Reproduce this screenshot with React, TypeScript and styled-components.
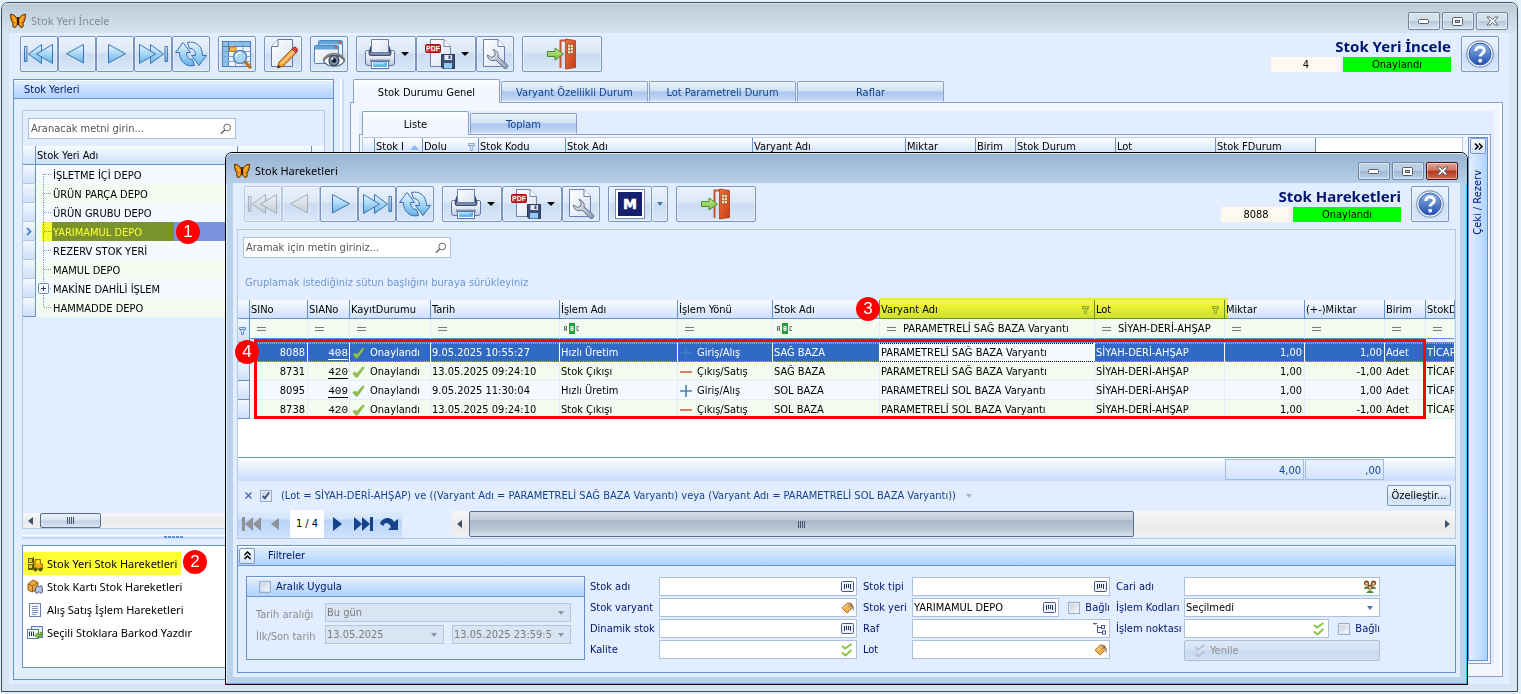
import React from "react";
import styled, { createGlobalStyle, css } from "styled-components";

const UI = '"DejaVu Sans Condensed", "Noto Sans", sans-serif';
const TITLE = '"Noto Sans", "Open Sans", sans-serif';
const LINE = "#6593cf";
const SOFT = "#b5c9e4";
const PANEL = "#e2eeff";
const NAVY = "#00156e";

const Global = createGlobalStyle`
  *, *::before, *::after { box-sizing: border-box; }
  body { margin: 0; background: #e4effc; font: 11px/14px ${UI}; color: #000; }
  button, input, select { font: inherit; color: inherit; margin: 0; }
  button { padding: 0; cursor: default; }
  svg { display: block; flex: none; }
`;

/* ---------- window chrome ---------- */

const Desktop = styled.main`
  position: relative;
  min-height: 100vh;
  padding: 2px 3px 2px 1px;
  display: flex;
  overflow: hidden;
`;

const MainWindow = styled.section`
  flex: 1;
  min-width: 0;
  display: flex;
  flex-direction: column;
  border: 1px solid #454a50;
  border-radius: 7px 7px 0 0;
  background: #d7e4f2;
  padding: 0 7px 7px;
`;

const DialogWindow = styled.section`
  position: absolute;
  left: 225px;
  top: 152px;
  right: 53px;
  bottom: 9px;
  display: flex;
  flex-direction: column;
  border: 1px solid #000;
  border-radius: 7px 7px 0 0;
  background: #b9d1ea;
  box-shadow: inset -1px -1px 0 #35c4e8, inset 1px 1px 0 #e8f2fb;
  padding: 0 7px 7px;
`;

const TitleBar = styled.header<{ $active?: boolean }>`
  height: 30px;
  margin: 0 -7px;
  padding: 5px 9px 0 8px;
  display: flex;
  align-items: center;
  gap: 5px;
  border-radius: 6px 6px 0 0;
  border-top: 1px solid ${(p) => (p.$active ? "#d9e6f3" : "#dfe7ee")};
  background: ${(p) =>
    p.$active ? "linear-gradient(#99b4d1, #b6cfe9)" : "linear-gradient(#bdcbd8, #d6e3f0)"};
`;

const TitleText = styled.h1<{ $active?: boolean }>`
  flex: 1;
  margin: 0;
  font: 400 11px/16px ${TITLE};
  color: ${(p) => (p.$active ? "#000" : "#858a90")};
`;

const WinButtonRow = styled.div`
  display: flex;
  gap: 2px;
`;

const WinButton = styled.button<{ $close?: boolean }>`
  width: 32px;
  height: 18px;
  display: grid;
  place-items: center;
  border: 1px solid ${(p) => (p.$close ? "#4c1017" : "#6f85a0")};
  border-radius: 2px;
  box-shadow: inset 0 0 0 1px rgba(255, 255, 255, 0.45);
  background: ${(p) =>
    p.$close
      ? "linear-gradient(#e2a598, #cf7563 45%, #b5341c 50%, #cc6a50)"
      : "linear-gradient(rgba(255,255,255,.35), rgba(255,255,255,.15) 48%, rgba(120,145,175,.25) 52%, rgba(255,255,255,.15))"};
`;

const Client = styled.div`
  flex: 1;
  min-height: 0;
  display: flex;
  flex-direction: column;
  background: ${PANEL};
`;

/* ---------- toolbar ---------- */

const Toolbar = styled.div`
  display: flex;
  padding: 3px 11px 7px;
`;

const Group = styled.div`
  display: flex;
  margin-right: 8px;
`;

const ToolButton = styled.button<{ $w?: number; $join?: boolean }>`
  width: ${(p) => p.$w ?? 38}px;
  height: 36px;
  display: flex;
  align-items: center;
  justify-content: center;
  gap: 5px;
  border: 1px solid #7896c2;
  border-radius: 2px;
  ${(p) => p.$join && css`border-left: 0;`}
  background: linear-gradient(#eaf2fc, #dce8f7 45%, #cbdcf2 50%, #d9e7f9);
  box-shadow: inset 0 0 0 1px rgba(255, 255, 255, 0.4);
  &:disabled {
    border-color: #b7c7de;
  }
`;

const Record = styled.div`
  margin-left: auto;
  display: grid;
  grid-template-columns: 70px 108px;
  grid-template-rows: 21px 15px;
  column-gap: 2px;
  margin-right: 10px;
`;

const RecordTitle = styled.h2`
  grid-column: 1 / 3;
  margin: 0;
  text-align: right;
  white-space: nowrap;
  font: 700 15px/21px ${TITLE};
  color: ${NAVY};
`;

const RecordCell = styled.div<{ $bg: string }>`
  background: ${(p) => p.$bg};
  text-align: center;
  line-height: 16px;
`;

/* ---------- main window body ---------- */

const MainBody = styled.div`
  flex: 1;
  min-height: 0;
  display: flex;
  padding: 0 7px 0 4px;
`;

const SidePanel = styled.aside`
  width: 321px;
  margin-bottom: 4px;
  display: flex;
  flex-direction: column;
  border: 1px solid ${LINE};
  padding-bottom: 11px;
`;

const PanelHeader = styled.h3`
  margin: 0;
  height: 19px;
  padding: 2px 0 0 10px;
  display: flex;
  align-items: center;
  border-bottom: 1px solid ${LINE};
  box-shadow: inset 0 1px 0 #fff;
  background: linear-gradient(#e3efff, #afd2ff);
  color: ${NAVY};
  font: 400 11px/14px ${UI};
`;

const TreeFrame = styled.div`
  flex: 1;
  margin: 11px 8px 0;
  display: flex;
  flex-direction: column;
  border: 1px solid ${SOFT};
`;

const SearchBox = styled.label`
  width: 208px;
  height: 21px;
  margin: 7px 0 0 5px;
  display: flex;
  align-items: center;
  border: 1px solid #abc1de;
  background: #fff;
  padding-right: 3px;
  input {
    flex: 1;
    min-width: 0;
    border: 0;
    outline: 0;
    padding: 0 2px;
    background: none;
  }
  input::placeholder {
    color: #555;
    opacity: 1;
  }
`;

const TreeHeader = styled.div`
  display: flex;
  height: 19px;
  margin-top: 7px;
  border-bottom: 1px solid ${LINE};
  background: linear-gradient(#f8fbff, #e3eefe 50%, #cfe0fb);
  line-height: 20px;
`;

const TreeHeadCell = styled.span<{ $w: number }>`
  width: ${(p) => p.$w}px;
  padding-left: 1px;
  border-right: 1px solid ${LINE};
`;

const TreeList = styled.ul`
  margin: 0;
  padding: 0;
  list-style: none;
  flex: 1;
`;

const TreeRow = styled.li`
  position: relative;
  display: flex;
  height: 19px;
  background: #f4faff;
  &:nth-child(even) {
    background: #f3fbf0;
  }
`;

const TreeHandle = styled.span`
  width: 13px;
  padding-left: 3px;
  display: flex;
  align-items: center;
  border-right: 1px solid ${LINE};
  border-bottom: 1px solid ${SOFT};
  background: linear-gradient(#f2f7ff, #cfe0fa);
  ${TreeRow}:last-child & {
    border-bottom-color: ${LINE};
  }
`;

const TreeBranch = styled.span`
  width: 16px;
`;

const TreeLabel = styled.span<{ $selected?: boolean }>`
  flex: 1;
  padding: 2px 0 0 1px;
  line-height: 17px;
  ${(p) => p.$selected && css`background: #7a93dd; color: #fff;`}
`;

const Marker = styled.span<{ $l: number; $t: number; $w: number; $h: number }>`
  position: absolute;
  left: ${(p) => p.$l}px;
  top: ${(p) => p.$t}px;
  width: ${(p) => p.$w}px;
  height: ${(p) => p.$h}px;
  background: #ffff33;
  mix-blend-mode: multiply;
  pointer-events: none;
`;

const Badge = styled.span<{ $l: number; $t: number }>`
  position: absolute;
  z-index: 2;
  left: ${(p) => p.$l}px;
  top: ${(p) => p.$t}px;
  width: 24px;
  height: 24px;
  border-radius: 50%;
  background: #f00;
  color: #fff;
  text-align: center;
  font: 400 17px/24px "Liberation Sans", sans-serif;
`;

const ScrollTrack = styled.div<{ $h: number }>`
  height: ${(p) => p.$h}px;
  padding: 0 5px;
  display: flex;
  align-items: center;
  flex: none;
  background: linear-gradient(#f7f7f7, #ebebeb 60%, #f0f0f0);
`;

const ScrollThumb = styled.span<{ $w: string; $dark?: boolean }>`
  width: ${(p) => p.$w};
  height: 100%;
  margin: 0 auto 0 7px;
  display: grid;
  place-items: center;
  border: 1px solid #5a6b8c;
  border-radius: 2px;
  background: ${(p) =>
    p.$dark
      ? "linear-gradient(#d3dbe5, #c3ced9 30%, #a9b8cb 36%, #bac7d6 75%, #dbe5ee)"
      : "linear-gradient(#eaf2fb, #dbe6f3 48%, #c0cfe2 52%, #d9e5f2)"};
`;

const Splitter = styled.div`
  height: 16px;
  margin: 0 8px;
  display: flex;
  align-items: center;
  justify-content: center;
  background: linear-gradient(#fff, #fff) 0 6px / 100% 1px no-repeat,
    linear-gradient(#c3dafa, #c3dafa) 0 8px / 100% 2px no-repeat;
`;

const ActionList = styled.ul`
  margin: 0 8px;
  padding: 6px 0 23px;
  list-style: none;
  border: 1px solid ${LINE};
  background: #fff;
`;

const ActionItem = styled.li`
  position: relative;
  height: 23px;
  a {
    display: flex;
    align-items: center;
    gap: 4px;
    height: 23px;
    padding: 1px 0 0 4px;
    color: #000;
    text-decoration: none;
    font: 400 11px/16px ${TITLE};
  }
`;

const VerticalSplitter = styled.div`
  width: 4px;
  margin: 0 6px 4px;
  background: linear-gradient(90deg, #fff 50%, #c9defb 50%);
`;

const TabArea = styled.div`
  flex: 1;
  min-width: 0;
  display: flex;
  flex-direction: column;
`;

const TabStrip = styled.div`
  display: flex;
  align-items: flex-end;
  gap: 1px;
  padding-left: 3px;
`;

const Tab = styled.button<{ $w: number; $active?: boolean }>`
  width: ${(p) => p.$w}px;
  height: ${(p) => (p.$active ? 24 : 21)}px;
  margin-bottom: ${(p) => (p.$active ? -1 : 0)}px;
  padding-top: 2px;
  position: relative;
  border: 1px solid #8ba0c9;
  border-bottom-width: ${(p) => (p.$active ? 0 : 1)}px;
  border-bottom-color: #f2f7ff;
  border-radius: 2px 2px 0 0;
  color: ${(p) => (p.$active ? "#000" : "#15428b")};
  background: ${(p) =>
    p.$active
      ? "linear-gradient(#fff, #f2f7ff 40%)"
      : "linear-gradient(#eef5fd, #cfdff4 48%, #a6c6ef 52%, #c9defa)"};
`;

const TabPage = styled.div`
  flex: 1;
  display: flex;
  flex-direction: column;
  border: 1px solid #8ba0c9;
  background: #f2f7ff;
  padding: 8px 8px 12px;
  margin-bottom: 7px;
  box-shadow: inset -2px 0 0 #fff;
`;

const InnerArea = styled.div`
  flex: 1;
  display: flex;
  flex-direction: column;
  background: ${PANEL};
  padding-right: 3px;
`;

const InnerPage = styled.div`
  flex: 1;
  display: flex;
  border: 1px solid #8ba0c9;
  background: #f2f7ff;
  padding: 2px;
`;

const StockGrid = styled.div`
  flex: 1;
  min-width: 0;
  overflow: hidden;
  border: 1px solid ${SOFT};
  background: #fff;
  table {
    border-spacing: 0;
    table-layout: fixed;
    width: 953px;
  }
  th {
    height: 19px;
    padding: 0 0 0 1px;
    font-weight: 400;
    text-align: left;
    white-space: nowrap;
    border-right: 1px solid ${LINE};
    border-bottom: 1px solid ${LINE};
    background: linear-gradient(#fff, #e3eefe 50%, #cfe0fb);
  }
`;

const HeadInner = styled.span`
  display: flex;
  align-items: center;
  justify-content: space-between;
  padding-right: 3px;
`;

const DockBar = styled.aside`
  width: 20px;
  margin-left: 5px;
  border: 1px solid ${LINE};
  background: linear-gradient(90deg, #e3efff, #afd2ff);
  display: flex;
  flex-direction: column;
  align-items: center;
`;

const ChevronButton = styled.button`
  width: 16px;
  height: 16px;
  display: grid;
  place-items: center;
  border: 1px solid #7f98c0;
  border-radius: 2px;
  background: linear-gradient(#f7fbff, #d4e4fa);
`;

const DockLabel = styled.span`
  margin-top: 16px;
  writing-mode: vertical-rl;
  transform: rotate(180deg);
  color: ${NAVY};
`;

/* ---------- dialog body ---------- */

const GridPanel = styled.div`
  flex: 1;
  min-height: 0;
  margin: 0 4px;
  display: flex;
  flex-direction: column;
  border: 1px solid ${SOFT};
`;

const GroupHint = styled.p`
  margin: 0;
  height: 42px;
  padding: 18px 0 0 7px;
  color: #6f97d0;
`;

const GridHolder = styled.div`
  position: relative;
  flex: 1;
  min-height: 0;
  background: #fff;
`;

const GridClip = styled.div`
  overflow: hidden;
`;

const DataTable = styled.table`
  border-spacing: 0;
  table-layout: fixed;
  width: 100%;
  min-width: 1217px;
  white-space: nowrap;
  th,
  td {
    padding: 0 2px 0 1px;
    overflow: hidden;
    text-align: left;
    font-weight: 400;
  }
  th {
    padding-top: 1px;
  }
`;

const HeadCell = styled.th`
  height: 19px;
  line-height: 16px;
  border-right: 1px solid ${LINE};
  border-bottom: 1px solid ${LINE};
  background: linear-gradient(#f8fbff, #e3eefe 50%, #cfe0fb);
`;

const FilterCell = styled.td`
  height: 24px;
  border-right: 1px solid #e2ecfb;
  border-bottom: 1px solid ${LINE};
  background: linear-gradient(#f3fbf1, #f3fbf1) 0 0 / 100% 19px no-repeat,
    linear-gradient(${LINE}, ${LINE}) 0 19px / 100% 1px no-repeat, ${PANEL};
  vertical-align: top;
`;

const FilterInner = styled.span<{ $pad: number }>`
  display: flex;
  align-items: center;
  gap: 7px;
  height: 19px;
  padding-left: ${(p) => p.$pad}px;
`;

const HandleCell = styled.td`
  height: 19px;
  border-right: 1px solid ${LINE};
  border-bottom: 1px solid ${LINE};
  background: linear-gradient(#f2f7ff, #cfe0fa);
`;

const DataRow = styled.tr<{ $tone: "a" | "b" | "sel" }>`
  background: ${(p) => ({ a: "#f4faff", b: "#f3fbf0", sel: "#316ac5" })[p.$tone]};
  color: ${(p) => (p.$tone === "sel" ? "#fff" : "#000")};
`;

const Cell = styled.td<{ $right?: boolean; $focus?: boolean; $sel?: boolean }>`
  height: 19px;
  line-height: 16px;
  border-right: 1px solid ${(p) => (p.$sel ? "#fff" : "#e2ecfb")};
  border-bottom: 1px solid #e2ecfb;
  && {
    padding-top: 2px;
    text-align: ${(p) => (p.$right ? "right" : "left")};
    ${(p) =>
      p.$sel &&
      css`
        border-bottom: 1px dotted ${p.$focus ? "#000" : "#e8a24a"};
        background: linear-gradient(90deg, ${p.$focus ? "#000" : "#e8a24a"} 50%, transparent 50%) 0 0 /
          2px 1px repeat-x ${p.$focus ? "#f4faff" : "#316ac5"};
        color: ${p.$focus ? "#000" : "#fff"};
      `}
  }
`;

const RefCell = styled(Cell)`
  && {
    padding-right: 1px;
    line-height: 14px;
  }
`;

const CellIcon = styled.span<{ $gap: number }>`
  display: flex;
  align-items: center;
  gap: ${(p) => p.$gap}px;
  padding-left: ${(p) => p.$gap - 4}px;
`;

const RefLink = styled.a`
  color: inherit;
  text-decoration: none;
  font: 11px/12px "Liberation Mono", monospace;
  border-bottom: 1px solid currentColor;
`;

const RedFrame = styled.div`
  position: absolute;
  left: 16px;
  top: 39px;
  width: 1172px;
  height: 80px;
  border: 3px solid #f00;
  pointer-events: none;
`;

const SummaryBar = styled.div`
  height: 24px;
  display: flex;
  gap: 1px;
  padding: 1px 0 1px 987px;
  border-top: 1px solid ${LINE};
  background: linear-gradient(#fdfeff, #c8dcfb);
`;

const SummaryCell = styled.span`
  flex: none;
  width: 79px;
  border: 1px solid #9dbce6;
  background: linear-gradient(#eaf3ff, #d3e4fc);
  color: #15428b;
  text-align: right;
  padding-right: 2px;
  line-height: 21px;
`;

const FilterBar = styled.div`
  height: 29px;
  display: flex;
  align-items: center;
  padding: 0 4px 0 7px;
  color: #15428b;
`;

const CheckBox = styled.input`
  appearance: none;
  width: 12px;
  height: 12px;
  border: 1px solid #9aabc4;
  background: linear-gradient(135deg, #ccd2da, #f5f7f9) content-box #f4f7fb;
  padding: 1px;
  flex: none;
  position: relative;
  &:checked::after {
    content: "";
    position: absolute;
    left: 3px;
    top: 0;
    width: 4px;
    height: 8px;
    border: solid #3d5c94;
    border-width: 0 2px 2px 0;
    transform: rotate(38deg);
  }
`;

const FilterText = styled.label`
  display: flex;
  align-items: center;
  gap: 9px;
  margin: 0 10px 0 8px;
`;

const SmallButton = styled.button`
  margin-left: auto;
  width: 64px;
  height: 21px;
  border: 1px solid #7896c2;
  border-radius: 2px;
  background: linear-gradient(#f0f6fd, #e1ecf9 48%, #d0dff3 52%, #dbe8f9);
  color: #000;
`;

const NavBar = styled.div`
  height: 28px;
  display: flex;
`;

const Pager = styled.div`
  width: 164px;
  display: flex;
  align-items: center;
  background: linear-gradient(#e0ecfd, #d3e4fb 32%, #b9d3f8 36%, #cfe2fd);
`;

const PagerButton = styled.button`
  width: 26px;
  height: 28px;
  border: 0;
  background: none;
  display: grid;
  place-items: center;
`;

const PageNumber = styled.span`
  width: 34px;
  height: 28px;
  background: #fff;
  text-align: center;
  line-height: 28px;
`;

const NavScroll = styled.div`
  flex: 1;
  margin-left: 50px;
  padding-top: 1px;
`;

const FilterPanel = styled.section`
  margin: 6px 4px 4px;
  border: 1px solid ${LINE};
`;

const FilterTitle = styled(PanelHeader)`
  padding: 0 0 0 1px;
  gap: 13px;
  height: 20px;
`;

const FilterBody = styled.div`
  display: flex;
  padding: 10px 0 12px 8px;
`;

const RangeGroup = styled.fieldset`
  flex: none;
  width: 339px;
  margin: 0;
  padding: 0;
  min-width: 0;
  border: 1px solid ${LINE};
`;

const RangeHead = styled(PanelHeader)`
  height: 20px;
  padding: 0 0 0 12px;
  label {
    display: flex;
    align-items: center;
    gap: 5px;
  }
`;

const RangeGrid = styled.div`
  display: grid;
  grid-template-columns: 61px 119px 119px;
  grid-auto-rows: 19px;
  gap: 3px 8px;
  padding: 6px 0 14px 9px;
  color: #8d8d8d;
  line-height: 24px;
`;

const FieldBox = styled.span<{ $off?: boolean; $span?: boolean; $grow?: boolean }>`
  height: 19px;
  min-width: 0;
  display: flex;
  align-items: center;
  ${(p) => p.$grow && css`flex: 1;`}
  ${(p) => p.$span && css`grid-column: 2 / 4;`}
  border: 1px solid ${(p) => (p.$off ? "#b5c5dc" : "#abc1de")};
  background: ${(p) => (p.$off ? "#dae5f4" : "#fff")};
  input,
  select {
    flex: 1;
    width: 0;
    min-width: 0;
    height: 17px;
    border: 0;
    outline: 0;
    padding: 0 1px;
    background: none;
    appearance: none;
    opacity: 1;
    line-height: 16px;
    color: ${(p) => (p.$off ? "#7c7c7c" : "#000")};
  }
`;

const IconButton = styled.button`
  border: 0;
  background: none;
  width: 18px;
  height: 17px;
  display: grid;
  place-items: center;
`;

const FieldGrid = styled.div`
  display: grid;
  grid-template-columns: 63px 198px 43px 198px 62px 196px;
  grid-auto-rows: 20px;
  gap: 1px 6px;
  margin-left: 5px;
  padding-top: 1px;
  color: ${NAVY};
  white-space: nowrap;
  & > label {
    line-height: 19px;
  }
`;

const FieldPair = styled.span`
  display: flex;
  label {
    display: flex;
    align-items: center;
    gap: 5px;
    height: 19px;
    margin-left: 9px;
  }
`;

const RefreshButton = styled.button`
  height: 21px;
  padding-left: 9px;
  display: flex;
  align-items: center;
  gap: 4px;
  border: 1px solid #a9bedd;
  border-radius: 2px;
  background: linear-gradient(#dfeaf8, #d6e3f4 48%, #c8d9f0 52%, #d3e2f6);
  color: #8d8d8d;
`;

/* ---------- icons ---------- */

const HiddenSvg = styled.svg`
  position: absolute;
`;

const Defs = () => (
  <HiddenSvg width="0" height="0" aria-hidden="true">
    <defs>
      <linearGradient id="gBlue" x1="0" y1="0" x2="0" y2="1">
        <stop offset="0" stopColor="#eaf8ff" />
        <stop offset="1" stopColor="#62b4ea" />
      </linearGradient>
      <linearGradient id="gGray" x1="0" y1="0" x2="0" y2="1">
        <stop offset="0" stopColor="#eef2f7" />
        <stop offset="1" stopColor="#c3ccd8" />
      </linearGradient>
      <linearGradient id="gPaper" x1="0" y1="0" x2="1" y2="1">
        <stop offset="0" stopColor="#ffffff" />
        <stop offset="1" stopColor="#d9e2f2" />
      </linearGradient>
      <linearGradient id="gHelp" x1="0" y1="0" x2="0" y2="1">
        <stop offset="0" stopColor="#8fb4ea" />
        <stop offset="1" stopColor="#1f4fae" />
      </linearGradient>
      <linearGradient id="gDoor" x1="0" y1="0" x2="1" y2="1">
        <stop offset="0" stopColor="#f0703f" />
        <stop offset="1" stopColor="#c63f17" />
      </linearGradient>
      <linearGradient id="gGreen" x1="0" y1="0" x2="0" y2="1">
        <stop offset="0" stopColor="#c7eb98" />
        <stop offset="1" stopColor="#79bd3c" />
      </linearGradient>
      <linearGradient id="gSteel" x1="0" y1="0" x2="1" y2="1">
        <stop offset="0" stopColor="#f3f6fa" />
        <stop offset="1" stopColor="#8b9bb5" />
      </linearGradient>
      <linearGradient id="gTray" x1="0" y1="0" x2="0" y2="1">
        <stop offset="0" stopColor="#ffffff" />
        <stop offset="1" stopColor="#c3cee4" />
      </linearGradient>
    </defs>
  </HiddenSvg>
);

const Butterfly = () => (
  <svg width="16" height="16" viewBox="0 0 16 16">
    <path d="M.6 1.200C3.500 1.200 6.600 3.600 7.500 6.500V10.500C7 13 5.800 14.800 4 14.400C2.600 14 2.600 12 3 10.200C1.400 8.500 .2 4.500 .6 1.200Z" fill="#e8830c" stroke="#5e2c07" />
    <path d="M15.400 1.200C12.500 1.200 9.400 3.600 8.500 6.500V10.500C9 13 10.200 14.800 12 14.400C13.400 14 13.400 12 13 10.200C14.600 8.500 15.800 4.500 15.400 1.200Z" fill="#e8830c" stroke="#5e2c07" />
    <path d="M2.400 3.200L5.600 7.500M4 5.500L5.500 9M4.600 12.500L6 10.500M13.600 3.200L10.400 7.500M12 5.500L10.500 9M11.400 12.500L10 10.500" stroke="#ffb52e" strokeWidth="1.700" />
    <path d="M8 4V12" stroke="#33190a" strokeWidth="1.800" />
  </svg>
);

type NavKind = "first" | "prev" | "next" | "last";
const NAV_PATHS: Record<NavKind, string[]> = {
  first: ["M1.5 8.5h2.4v15h-2.4z", "M18.5 6.5v19L5.5 16z", "M29.5 6.5v19L13.5 16z"],
  prev: ["M22.5 6.5v18.5L5.5 15.7z"],
  next: ["M9.5 6.5v18.5L26.5 15.7z"],
  last: ["M28 8.5h2.4v15H28z", "M13.5 6.5v19L26.5 16z", "M2.5 6.5v19L18.5 16z"],
};
const NavIcon = ({ kind, off }: { kind: NavKind; off?: boolean }) => (
  <svg width="32" height="32" viewBox="0 0 32 32" fill={off ? "url(#gGray)" : "url(#gBlue)"} stroke={off ? "#a6adb8" : "#3f72b0"} strokeLinejoin="round">
    {NAV_PATHS[kind].map((d) => (
      <path key={d} d={d} />
    ))}
  </svg>
);

const RefreshIcon = () => (
  <svg width="32" height="32" viewBox="0 0 32 32" fill="url(#gBlue)" stroke="#3a6fb0" strokeLinejoin="round">
    <path d="M.5 14.500L8 4.500L15.500 14.500H11.500C11.500 18.500 13.500 21.500 17.500 21.500L19.500 27.500C11.500 29.500 4.500 24 4.500 14.500Z" />
    <path d="M31.500 17.500L24 27.500L16.500 17.500H20.500C20.500 13.500 18.500 10.500 14.500 10.500L12.500 4.500C20.500 2.500 27.500 8 27.500 17.500Z" />
  </svg>
);

const GridSearchIcon = () => (
  <svg width="32" height="32" viewBox="0 0 32 32">
    <rect x="1.500" y="3.500" width="28" height="25" fill="#eef6fd" stroke="#4f7eb5" />
    <path d="M1.500 3.500h28v5h-28zM1.500 3.500h6v25h-6z" fill="#8fc0ea" stroke="#4f7eb5" />
    <path d="M7.500 13.500h22M1.500 13.500h6M1.500 18.500h28M1.500 23.500h28M14.500 3.500v25M22 3.500v25" stroke="#7ba7d3" fill="none" />
    <rect x="8.500" y="9" width="6.500" height="4.500" fill="#f7b54a" stroke="#c47c1c" />
    <path d="M23.500 23.500L29 29" stroke="#b8762a" strokeWidth="3.400" strokeLinecap="round" />
    <circle cx="19" cy="19" r="6.500" fill="#a9d8f7" stroke="#6484b4" strokeWidth="1.600" />
    <path d="M15 18.500a4.500 4.500 0 0 1 5-3.800" stroke="#fff" strokeWidth="1.600" fill="none" />
  </svg>
);

const EditIcon = () => (
  <svg width="32" height="32" viewBox="0 0 32 32">
    <path d="M11 1.500H25.500V28.500H4.500V8.500Z" fill="url(#gPaper)" stroke="#5f75a6" strokeLinejoin="round" />
    <path d="M11 1.500V8.500H4.500" fill="#fff" stroke="#5f75a6" />
    <path d="M10.500 30L12 24L25 11L29 15L16.500 28Z" fill="#f2a243" stroke="#9a5a17" strokeLinejoin="round" />
    <path d="M25 11L27 9.200C28.600 8.400 31 11 30.400 12.800L29 15Z" fill="#dc4b3f" stroke="#8f2b22" />
    <path d="M10.500 30L11.400 26.800L13.600 29Z" fill="#333" />
    <path d="M14 26L27 13" stroke="#ffd79a" strokeWidth="1.200" />
  </svg>
);

const PreviewIcon = () => (
  <svg width="32" height="32" viewBox="0 0 32 32">
    <rect x="5.500" y="2.500" width="24" height="18" rx="1" fill="#eaf4fd" stroke="#4f84bf" />
    <rect x="6" y="3" width="23" height="3.500" fill="#5fa6df" />
    <rect x="1.500" y="7.500" width="24" height="18" rx="1" fill="url(#gPaper)" stroke="#4f84bf" />
    <rect x="2" y="8" width="23" height="3.500" fill="#5fa6df" />
    <circle cx="27" cy="4.500" r="1.300" fill="#e4503c" />
    <circle cx="23" cy="9.500" r="1.300" fill="#e4503c" />
    <path d="M10.500 23C15 15.500 27 15.500 31.500 23C27 30 15 30 10.500 23Z" fill="#fff" stroke="#4b5a70" strokeWidth="1.200" />
    <circle cx="21" cy="22.500" r="5" fill="#8094ac" stroke="#2f4158" strokeWidth="1.200" />
    <circle cx="21" cy="22.500" r="2.400" fill="#16202e" />
    <circle cx="19.300" cy="20.800" r="1.100" fill="#fff" />
    <path d="M10.500 22C15 13.500 27 13.500 31.500 22" fill="none" stroke="#84766c" strokeWidth="1.800" />
  </svg>
);

const PrintIcon = () => (
  <svg width="32" height="32" viewBox="0 0 32 32">
    <path d="M1.500 14Q1.500 12.500 3 12.500H29Q30.500 12.500 30.500 14V25Q30.500 27.500 28 27.500H4Q1.500 27.500 1.500 25Z" fill="url(#gTray)" stroke="#5f75a6" />
    <path d="M6.500 8H25.500L27.500 14.500Q27.500 18 24.500 18H7.500Q4.500 18 4.500 14.500Z" fill="#3b4a6d" />
    <path d="M5.500 14.500Q6 17 8 17H24Q26 17 26.500 14.500Z" fill="#7d8cab" />
    <path d="M7.500 1.500H24.500V14.500H7.500Z" fill="url(#gPaper)" stroke="#6a7fae" />
    <path d="M6 21.500H26V24H6Z" fill="#8493b2" />
    <path d="M7.500 23.500H24.500V30.500H7.500Z" fill="#fff" stroke="#5c76a8" />
    <path d="M9 24H23V29H9Z" fill="#62b6ee" />
    <path d="M9 24H23L18 26.500H9Z" fill="#a4d9f8" />
  </svg>
);

const PdfSaveIcon = () => (
  <svg width="32" height="32" viewBox="0 0 32 32">
    <path d="M6.500 1.500H20L26.500 8.500V28.500H6.500Z" fill="url(#gPaper)" stroke="#7183ac" strokeLinejoin="round" />
    <path d="M20 1.500V8.500H26.500" fill="#fff" stroke="#7183ac" />
    <rect x="1.500" y="6.500" width="15" height="8" rx="1" fill="#d2252b" stroke="#9c1318" />
    <text x="9" y="13" fontSize="7" fontWeight="700" fontFamily="Liberation Sans" fill="#fff" textAnchor="middle">PDF</text>
    <path d="M17.500 16.500H30.500V30.500H19L17.500 29Z" fill="#3e5077" stroke="#2a3858" />
    <rect x="20.500" y="17" width="7.500" height="5" fill="#e6edf7" />
    <rect x="24.500" y="17.500" width="2" height="3.500" fill="#3e5077" />
    <rect x="20" y="25" width="8" height="5.500" fill="#8fcbf2" />
  </svg>
);

const WrenchIcon = () => (
  <svg width="32" height="32" viewBox="0 0 32 32">
    <path d="M4.500 1.500H19L25.500 8.500V28.500H4.500Z" fill="url(#gPaper)" stroke="#6a7fae" strokeLinejoin="round" />
    <path d="M19 1.500V8.500H25.500" fill="#fff" stroke="#6a7fae" />
    <path d="M14 11.500C17.500 12 20 15.500 19 19L28 26.500C30 28.500 27.500 31.500 25 30L17 22C13 24 8.500 21.500 8.500 17L12.500 19.500L16 17.500V14Z" fill="url(#gSteel)" stroke="#5d6c88" strokeLinejoin="round" />
  </svg>
);

const DoorIcon = () => (
  <svg width="32" height="32" viewBox="0 0 32 32">
    <path d="M14.500 30V2.500H22" fill="none" stroke="#c8552f" strokeWidth="2" />
    <path d="M19.500 1L29.500 2.500V29.500L19.500 31Z" fill="url(#gDoor)" stroke="#a83a17" strokeWidth=".8" />
    <path d="M21.500 6L27.500 6.500V15.500L21.500 16Z" fill="#f3e2cb" stroke="#8a4a20" strokeWidth=".8" />
    <path d="M24.500 6V16M21.500 9.300H27.500M21.500 12.500H27.500" stroke="#b5722f" strokeWidth=".9" />
    <path d="M1.500 13.500H9V10L17.500 16L9 22V18.500H1.500Z" fill="url(#gGreen)" stroke="#4d8a24" strokeLinejoin="round" />
  </svg>
);

const HelpIcon = () => (
  <svg width="30" height="30" viewBox="0 0 30 30">
    <circle cx="15" cy="15" r="13.200" fill="#f4f8ff" stroke="#7f98c4" strokeWidth="1.200" />
    <circle cx="15" cy="15" r="11" fill="url(#gHelp)" stroke="#3c63ab" />
    <path d="M10.800 12C10.800 6.500 19.400 6.700 19.300 11.600C19.200 14.500 15.200 14.700 15.200 17.600" fill="none" stroke="#fff" strokeWidth="3" />
    <circle cx="15.200" cy="21.700" r="1.900" fill="#fff" />
  </svg>
);

const Caret = ({ color = "#000", size = 8 }: { color?: string; size?: number }) => (
  <svg width={size} height="4" viewBox="0 0 8 4" preserveAspectRatio="none">
    <path d="M0 0H8L4 4Z" fill={color} />
  </svg>
);

const BrandIcon = () => (
  <svg width="30" height="30" viewBox="0 0 30 30">
    <rect x=".5" y=".5" width="29" height="29" fill="#fff" stroke="#7b86b5" />
    <rect x="3" y="3" width="24" height="24" fill="#151f6d" />
    <text x="15" y="20" fontSize="14" fontWeight="700" fontFamily="DejaVu Sans" fill="#fff" stroke="#fff" strokeWidth=".6" textAnchor="middle">M</text>
  </svg>
);

const Magnifier = () => (
  <svg width="12" height="12" viewBox="0 0 12 12" fill="none" stroke="#666">
    <circle cx="7.200" cy="4.500" r="3.400" />
    <path d="M4.700 7L1 10.800" strokeWidth="1.500" />
  </svg>
);

const Funnel = ({ color = "#8fa9cf" }: { color?: string }) => (
  <svg width="7" height="8" viewBox="0 0 7 8" fill="none" stroke={color}>
    <path d="M.5 .5H6.500V2.500L4.500 4.500V7.500H2.500V4.500L.5 2.500Z" fill="#c6d8f0" fillOpacity=".6" />
    <path d="M.5 2.500H6.500" />
  </svg>
);

const EqualsIcon = () => (
  <svg width="9" height="4" viewBox="0 0 9 4" fill="#7a7a7a">
    <path d="M0 0H9V1H0ZM0 3H9V4H0Z" />
  </svg>
);

const AbcIcon = () => (
  <svg width="16" height="11" viewBox="0 0 16 11">
    <rect x="5" width="6" height="11" fill="#1fa038" />
    <g fill="none">
      <path d="M.5 8V3.500H2.500V8M.5 6H2.500M15 3.500H13V7.500H15" stroke="#6d6d6d" />
      <path d="M7 3.500H9V7.500H7ZM7 5.500H9" stroke="#fff" />
    </g>
  </svg>
);

const Tick = () => (
  <svg width="13" height="12" viewBox="0 0 13 12">
    <path d="M.8 7.200L3.400 6L4.700 7.800L10.600 1L12.400 1.800L5.400 11.200H3.800Z" fill="#93bf4c" stroke="#76a436" strokeWidth=".5" />
  </svg>
);

const DoubleTick = ({ color = "#86c440" }: { color?: string }) => (
  <svg width="12" height="14" viewBox="0 0 12 14" fill="none" stroke={color} strokeWidth="1.800">
    <path d="M1 3L4 5.500L10.500 1M1 9.500L4.500 12.500L10.500 7" />
  </svg>
);

const SignIcon = ({ plus, dim }: { plus?: boolean; dim?: boolean }) => (
  <svg width="12" height="12" viewBox="0 0 12 12" stroke={plus ? (dim ? "#4079c4" : "#4a7fb5") : "#d8603c"} strokeWidth="1.600">
    <path d={plus ? "M0 6H12M6 0V12" : "M0 6H12"} />
  </svg>
);

const BarcodeIcon = () => (
  <svg width="13" height="11" viewBox="0 0 13 11" fill="none" stroke="#4a5a86">
    <rect x=".5" y=".5" width="12" height="10" rx="1" fill="#eef2fa" />
    <path d="M3.500 3V8M5.500 3V7M7.500 3V7M9.500 3V8" stroke="#222e55" />
  </svg>
);

const TagIcon = () => (
  <svg width="13" height="12" viewBox="0 0 13 12">
    <path d="M1 6.200L6.500 1L10.500 1.600L11.500 5.500L6.200 11Z" fill="#f4b455" stroke="#a46a1e" strokeLinejoin="round" />
    <path d="M2.600 6.300L6.800 2.400" stroke="#ffe0a8" />
    <circle cx="8.800" cy="3.800" r="1.200" fill="#fff" stroke="#7d5118" strokeWidth=".7" />
    <path d="M9 3.600C11.500 1.500 13 5 12 8.500" fill="none" stroke="#666" />
  </svg>
);

const TreeIcon = () => (
  <svg width="14" height="12" viewBox="0 0 14 12" fill="none" stroke="#4a5a86">
    <path d="M0 .5H4M2 0V2M4.500 2V9.500H9M4.500 4.500H8" />
    <rect x="8.500" y="2.500" width="3" height="3" />
    <rect x="9.500" y="8" width="3" height="3" />
  </svg>
);

const PeopleIcon = () => (
  <svg width="14" height="13" viewBox="0 0 14 13">
    <circle cx="3.500" cy="3" r="2.600" fill="#7c4a1e" />
    <circle cx="10.500" cy="3" r="2.600" fill="#7c4a1e" />
    <circle cx="3.500" cy="3.600" r="1.300" fill="#f0c392" />
    <circle cx="10.500" cy="3.600" r="1.300" fill="#f0c392" />
    <path d="M.5 9Q3.500 3.500 6 9ZM8 9Q10.500 3.500 13.500 9Z" fill="#4f9440" />
    <circle cx="7" cy="7" r="2.600" fill="#7c4a1e" />
    <circle cx="7" cy="7.600" r="1.300" fill="#f0c392" />
    <path d="M3 13Q7 7.500 11 13Z" fill="#3f8a35" />
  </svg>
);

const DoubleChevron = ({ up }: { up?: boolean }) => (
  <svg width="9" height="9" viewBox="0 0 9 9" fill="none" stroke="#000" strokeWidth="1.500">
    <path d={up ? "M1.500 4L4.500 1L7.500 4M1.500 8L4.500 5L7.500 8" : "M1 1.500L4 4.500L1 7.500M5 1.500L8 4.500L5 7.500"} />
  </svg>
);

const SideArrow = ({ right }: { right?: boolean }) => (
  <svg width="5" height="8" viewBox="0 0 5 8">
    <path d={right ? "M0 0V8L5 4Z" : "M5 0V8L0 4Z"} fill="#3f4f6e" />
  </svg>
);

const Grip = () => (
  <svg width="8" height="7" viewBox="0 0 8 7" stroke="#44546f">
    <path d="M.5 0V7M2.500 0V7M4.500 0V7M6.500 0V7" />
  </svg>
);

const PagerIcon = ({ kind }: { kind: NavKind | "skip" }) => {
  const off = kind === "first" || kind === "prev";
  const paths = {
    first: "M0 0H3V14H0ZM11 0V14L3 7ZM19 0V14L11 7Z",
    prev: "M11 1V13L3 7Z",
    next: "M5 0V14L14 7Z",
    last: "M0 0V14L8 7ZM8 0V14L16 7ZM16 0H19V14H16Z",
    skip: "M0 7C2 0 11 -1 14 5L18 2V13H8L11 10C9 5 4 5 3.500 9Z",
  };
  return (
    <svg width="19" height="14" viewBox="0 0 19 14">
      <path d={paths[kind]} fill={off ? "#8e9299" : "#15428b"} />
    </svg>
  );
};

const TreeLines = ({ first, last, expand }: { first?: boolean; last?: boolean; expand?: boolean }) => (
  <svg width="16" height="19" viewBox="0 0 16 19" fill="none">
    <path d={`M7.500 ${first ? 9 : 0}V${last ? 10 : 19}M8 9.500H16`} stroke="#7f9cc4" strokeDasharray="1 1" />
    {expand && (
      <>
        <rect x="2.500" y="4.500" width="10" height="10" rx="1" fill="#f5f8fd" stroke="#6d86ad" />
        <path d="M5 9.500H10M7.500 7V12" stroke="#26416f" />
      </>
    )}
  </svg>
);

const ForkliftIcon = () => (
  <svg width="16" height="16" viewBox="0 0 16 16">
    <path d="M8 3.500H13.500V8H15.500V13H7V8H8Z" fill="#f3b02c" stroke="#a26d0c" />
    <rect x="9.500" y="4.500" width="3" height="3" fill="#fff7da" />
    <path d="M6.500 1V13.500H1" stroke="#5a5a4a" fill="none" />
    <rect x="1.500" y="2.500" width="4" height="4" fill="#e2d06a" stroke="#6b5c1c" />
    <rect x="1.500" y="8.500" width="4" height="4" fill="#e2d06a" stroke="#6b5c1c" />
    <circle cx="8.500" cy="13.500" r="2" fill="#555" />
    <circle cx="13.500" cy="13.500" r="2" fill="#555" />
  </svg>
);

const BoxesIcon = () => (
  <svg width="16" height="16" viewBox="0 0 16 16">
    <path d="M1 5L6 1L11 3.500V10L5 13L1 11Z" fill="#eba63c" stroke="#95601a" strokeLinejoin="round" />
    <path d="M1 5L5.500 7L11 3.500M5.500 7V13" stroke="#95601a" fill="none" />
    <path d="M9 8Q10.500 5 11.500 8L12.500 8Q14 5 15 8L15.500 13Q14 16 12.500 13H11.500Q10 16 8 13Z" fill="#b9cbe4" stroke="#44597f" />
  </svg>
);

const DocIcon = () => (
  <svg width="16" height="16" viewBox="0 0 16 16" fill="none">
    <rect x="2.500" y="1.500" width="11" height="13" fill="#f5f8ff" stroke="#6b80ad" />
    <path d="M5 4.500H11M5 6.500H11M5 8.500H11M5 10.500H11M5 12.500H9" stroke="#7f93bd" />
  </svg>
);

const BarcodePrintIcon = () => (
  <svg width="16" height="16" viewBox="0 0 16 16" fill="none">
    <rect x="4.500" y="1.500" width="11" height="11" fill="#dfe9f8" stroke="#5f7bb0" />
    <rect x=".5" y="4.500" width="11" height="9" fill="#f7faff" stroke="#5f7bb0" />
    <path d="M2.500 6.500V11M4.500 6.500V11M6.500 6.500V11" stroke="#20386b" />
    <path d="M15 7.500V11.500H11.500V13.500L7.500 10.500L11.500 7.500V9.500H13V7.500Z" fill="#7cc142" stroke="#43801e" strokeWidth=".6" />
  </svg>
);

/* ---------- shared pieces ---------- */

const WindowButtons = ({ active }: { active?: boolean }) => (
  <WinButtonRow>
    <WinButton aria-label="Küçült">
      <svg width="12" height="6" viewBox="0 0 12 6"><rect x=".5" y="1.500" width="10" height="4" rx="1" fill="#fff" stroke="#555c66" /></svg>
    </WinButton>
    <WinButton aria-label="Büyüt">
      <svg width="12" height="9" viewBox="0 0 12 9"><rect x=".5" y=".5" width="10" height="8" rx="1" fill="#fff" stroke="#555c66" /><rect x="3.500" y="3.500" width="4" height="2" fill="#b5c6d8" stroke="#555c66" /></svg>
    </WinButton>
    <WinButton aria-label="Kapat" $close={active}>
      <svg width="13" height="10" viewBox="0 0 13 10"><path d="M1 1H4L6.500 3.500L9 1H12L8.500 5L12 9H9L6.500 6.500L4 9H1L4.500 5Z" fill="#fff" stroke="#555c66" strokeWidth=".9" /></svg>
    </WinButton>
  </WinButtonRow>
);

const NavButtons = ({ atStart }: { atStart?: boolean }) => (
  <Group>
    <ToolButton aria-label="İlk" disabled={atStart}><NavIcon kind="first" off={atStart} /></ToolButton>
    <ToolButton aria-label="Önceki" disabled={atStart}><NavIcon kind="prev" off={atStart} /></ToolButton>
    <ToolButton aria-label="Sonraki"><NavIcon kind="next" /></ToolButton>
    <ToolButton aria-label="Son"><NavIcon kind="last" /></ToolButton>
    <ToolButton aria-label="Yenile"><RefreshIcon /></ToolButton>
  </Group>
);

const OutputButtons = () => (
  <Group>
    <ToolButton aria-label="Yazdır" $w={60}><PrintIcon /><Caret /></ToolButton>
    <ToolButton aria-label="PDF kaydet" $w={60}><PdfSaveIcon /><Caret /></ToolButton>
    <ToolButton aria-label="Ayarlar"><WrenchIcon /></ToolButton>
  </Group>
);

const RecordInfo = ({ title, id }: { title: string; id: string }) => (
  <>
    <Record>
      <RecordTitle>{title}</RecordTitle>
      <RecordCell $bg="#fffaf0">{id}</RecordCell>
      <RecordCell $bg="#00ff00">Onaylandı</RecordCell>
    </Record>
    <ToolButton aria-label="Yardım"><HelpIcon /></ToolButton>
  </>
);

/* ---------- data ---------- */

const DEPOTS = [
  "İŞLETME İÇİ DEPO",
  "ÜRÜN PARÇA DEPO",
  "ÜRÜN GRUBU DEPO",
  "YARIMAMUL DEPO",
  "REZERV STOK YERİ",
  "MAMUL DEPO",
  "MAKİNE DAHİLİ İŞLEM",
  "HAMMADDE DEPO",
];

const ACTIONS = [
  { icon: <ForkliftIcon />, label: "Stok Yeri Stok Hareketleri" },
  { icon: <BoxesIcon />, label: "Stok Kartı Stok Hareketleri" },
  { icon: <DocIcon />, label: "Alış Satış İşlem Hareketleri" },
  { icon: <BarcodePrintIcon />, label: "Seçili Stoklara Barkod Yazdır" },
];

const STOCK_COLUMNS: [string, number][] = [
  ["", 12], ["Stok I", 48], ["Dolu", 56], ["Stok Kodu", 87], ["Stok Adı", 187], ["Varyant Adı", 153],
  ["Miktar", 70], ["Birim", 40], ["Stok Durum", 100], ["Lot", 100], ["Stok FDurum", 100],
];

type Column = { name: string; w?: number; filter: "eq" | "abc"; value?: string; funnel?: boolean };
const COLUMNS: Column[] = [
  { name: "SINo", w: 58, filter: "eq" },
  { name: "SIANo", w: 42, filter: "eq" },
  { name: "KayıtDurumu", w: 81, filter: "eq" },
  { name: "Tarih", w: 129, filter: "eq" },
  { name: "İşlem Adı", w: 118, filter: "abc" },
  { name: "İşlem Yönü", w: 95, filter: "eq" },
  { name: "Stok Adı", w: 107, filter: "abc" },
  { name: "Varyant Adı", w: 215, filter: "eq", value: "PARAMETRELİ SAĞ BAZA Varyantı", funnel: true },
  { name: "Lot", w: 130, filter: "eq", value: "SİYAH-DERİ-AHŞAP", funnel: true },
  { name: "Miktar", w: 80, filter: "eq" },
  { name: "(+-)Miktar", w: 80, filter: "eq" },
  { name: "Birim", w: 41, filter: "eq" },
  { name: "StokD", filter: "eq" },
];

const ROWS = [
  { no: "8088", ref: "408", date: "9.05.2025 10:55:27", op: "Hızlı Üretim", incoming: true, item: "SAĞ BAZA", signed: "1,00" },
  { no: "8731", ref: "420", date: "13.05.2025 09:24:10", op: "Stok Çıkışı", incoming: false, item: "SAĞ BAZA", signed: "-1,00" },
  { no: "8095", ref: "409", date: "9.05.2025 11:30:04", op: "Hızlı Üretim", incoming: true, item: "SOL BAZA", signed: "1,00" },
  { no: "8738", ref: "420", date: "13.05.2025 09:24:10", op: "Stok Çıkışı", incoming: false, item: "SOL BAZA", signed: "-1,00" },
];

const Field = ({ id, icon, value, grow }: { id: string; icon: React.ReactNode; value?: string; grow?: boolean }) => (
  <FieldBox $grow={grow}>
    <input id={id} type="text" defaultValue={value} />
    <IconButton aria-label="Seç">{icon}</IconButton>
  </FieldBox>
);

const SidePane = () => (
  <SidePanel>
    <PanelHeader>Stok Yerleri</PanelHeader>
    <TreeFrame>
      <SearchBox>
        <input type="text" placeholder="Aranacak metni girin..." aria-label="Stok yeri ara" />
        <Magnifier />
      </SearchBox>
      <TreeHeader>
        <TreeHeadCell $w={13} />
        <TreeHeadCell $w={202}>Stok Yeri Adı</TreeHeadCell>
        <TreeHeadCell $w={74} />
      </TreeHeader>
      <TreeList>
        {DEPOTS.map((name, i) => (
          <TreeRow key={name}>
            <TreeHandle>
              {i === 3 && (
                <svg width="6" height="9" viewBox="0 0 6 9"><path d="M1 1L4.500 4.500L1 8" fill="none" stroke="#4f86d8" strokeWidth="1.800" /></svg>
              )}
            </TreeHandle>
            <TreeBranch>
              <TreeLines first={i === 0} last={i === DEPOTS.length - 1} expand={i === 6} />
            </TreeBranch>
            <TreeLabel $selected={i === 3}>{name}</TreeLabel>
            {i === 3 && (
              <>
                <Marker $l={19} $t={0} $w={132} $h={19} />
                <Badge $l={153} $t={-2}>1</Badge>
              </>
            )}
          </TreeRow>
        ))}
      </TreeList>
      <ScrollTrack $h={15}>
        <SideArrow />
        <ScrollThumb $w="61px"><Grip /></ScrollThumb>
      </ScrollTrack>
    </TreeFrame>
    <Splitter>
      <svg width="20" height="4" viewBox="0 0 20 4"><path d="M0 2H3M4 2H7M8 2H11M12 2H15M16 2H19" stroke="#5d8fd6" strokeWidth="2" /></svg>
    </Splitter>
    <ActionList>
      {ACTIONS.map((a, i) => (
        <ActionItem key={a.label}>
          <a href="#">{a.icon}{a.label}</a>
          {i === 0 && (
            <>
              <Marker $l={0} $t={0} $w={158} $h={23} />
              <Badge $l={160} $t={-2}>2</Badge>
            </>
          )}
        </ActionItem>
      ))}
    </ActionList>
  </SidePanel>
);

const StockTabs = () => (
  <TabArea>
    <TabStrip role="tablist">
      <Tab role="tab" $w={147} $active>Stok Durumu Genel</Tab>
      <Tab role="tab" $w={147}>Varyant Özellikli Durum</Tab>
      <Tab role="tab" $w={147}>Lot Parametreli Durum</Tab>
      <Tab role="tab" $w={147}>Raflar</Tab>
    </TabStrip>
    <TabPage>
      <InnerArea>
        <TabStrip role="tablist">
          <Tab role="tab" $w={107} $active>Liste</Tab>
          <Tab role="tab" $w={107}>Toplam</Tab>
        </TabStrip>
        <InnerPage>
          <StockGrid>
            <table>
              <colgroup>{STOCK_COLUMNS.map(([n, w]) => <col key={n} width={w} />)}</colgroup>
              <thead>
                <tr>
                  {STOCK_COLUMNS.map(([n]) => (
                    <th key={n}>
                      <HeadInner>
                        {n}
                        {n === "Stok I" && <svg width="9" height="5" viewBox="0 0 9 5"><path d="M0 5H9L4.500 0Z" fill="#8ab8f2" /></svg>}
                        {n === "Dolu" && <Funnel />}
                      </HeadInner>
                    </th>
                  ))}
                </tr>
              </thead>
            </table>
          </StockGrid>
          <DockBar>
            <ChevronButton aria-label="Genişlet"><DoubleChevron /></ChevronButton>
            <DockLabel>Çeki / Rezerv</DockLabel>
          </DockBar>
        </InnerPage>
      </InnerArea>
    </TabPage>
  </TabArea>
);

const MovementGrid = () => (
  <GridHolder>
    <GridClip>
      <DataTable>
        <colgroup>
          <col width={12} />
          {COLUMNS.map((c) => <col key={c.name} width={c.w} />)}
        </colgroup>
        <thead>
          <tr>
            <HeadCell />
            {COLUMNS.map((c) => (
              <HeadCell key={c.name}>
                <HeadInner>{c.name}{c.funnel && <Funnel />}</HeadInner>
              </HeadCell>
            ))}
          </tr>
        </thead>
        <tbody>
          <tr>
            <HandleCell><Funnel color="#5f94dc" /></HandleCell>
            {COLUMNS.map((c) => (
              <FilterCell key={c.name}>
                <FilterInner $pad={c.filter === "abc" ? 3 : 6}>
                  {c.filter === "abc" ? <AbcIcon /> : <EqualsIcon />}
                  {c.value}
                </FilterInner>
              </FilterCell>
            ))}
          </tr>
          {ROWS.map((r, i) => {
            const sel = i === 0;
            return (
              <DataRow key={r.no} $tone={sel ? "sel" : i % 2 ? "b" : "a"}>
                <HandleCell />
                <Cell $sel={sel} $right>{r.no}</Cell>
                <RefCell $sel={sel} $right><RefLink href="#">{r.ref}</RefLink></RefCell>
                <Cell $sel={sel}><CellIcon $gap={5}><Tick />Onaylandı</CellIcon></Cell>
                <Cell $sel={sel}>{r.date}</Cell>
                <Cell $sel={sel}>{r.op}</Cell>
                <Cell $sel={sel}>
                  <CellIcon $gap={5}>
                    <SignIcon plus={r.incoming} dim={sel} />
                    {r.incoming ? "Giriş/Alış" : "Çıkış/Satış"}
                  </CellIcon>
                </Cell>
                <Cell $sel={sel}>{r.item}</Cell>
                <Cell $sel={sel} $focus={sel}>PARAMETRELİ {r.item} Varyantı</Cell>
                <Cell $sel={sel}>SİYAH-DERİ-AHŞAP</Cell>
                <Cell $sel={sel} $right>1,00</Cell>
                <Cell $sel={sel} $right>{r.signed}</Cell>
                <Cell $sel={sel}>Adet</Cell>
                <Cell $sel={sel}>TİCAR</Cell>
              </DataRow>
            );
          })}
        </tbody>
      </DataTable>
    </GridClip>
    <Marker $l={642} $t={-2} $w={348} $h={21} />
    <RedFrame />
    <Badge $l={618} $t={-3}>3</Badge>
    <Badge $l={-3} $t={40}>4</Badge>
  </GridHolder>
);

const Filters = () => (
  <FilterPanel>
    <FilterTitle as="div">
      <ChevronButton aria-label="Daralt"><DoubleChevron up /></ChevronButton>
      Filtreler
    </FilterTitle>
    <FilterBody>
      <RangeGroup>
        <RangeHead as="div">
          <label><CheckBox type="checkbox" />Aralık Uygula</label>
        </RangeHead>
        <RangeGrid>
          <label htmlFor="range">Tarih aralığı</label>
          <FieldBox $off $span>
            <select id="range" disabled><option>Bu gün</option></select>
            <IconButton aria-label="Aç" disabled><Caret color="#8a97ab" size={6} /></IconButton>
          </FieldBox>
          <label htmlFor="from">İlk/Son tarih</label>
          <FieldBox $off>
            <input id="from" type="text" disabled defaultValue="13.05.2025" />
            <IconButton aria-label="Aç" disabled><Caret color="#8a97ab" size={6} /></IconButton>
          </FieldBox>
          <FieldBox $off>
            <input aria-label="Son tarih" type="text" disabled defaultValue="13.05.2025 23:59:59" />
            <IconButton aria-label="Aç" disabled><Caret color="#8a97ab" size={6} /></IconButton>
          </FieldBox>
        </RangeGrid>
      </RangeGroup>
      <FieldGrid>
        <label htmlFor="stokadi">Stok adı</label>
        <Field id="stokadi" icon={<BarcodeIcon />} />
        <label htmlFor="stoktipi">Stok tipi</label>
        <Field id="stoktipi" icon={<BarcodeIcon />} />
        <label htmlFor="cari">Cari adı</label>
        <Field id="cari" icon={<PeopleIcon />} />

        <label htmlFor="varyant">Stok varyant</label>
        <Field id="varyant" icon={<TagIcon />} />
        <label htmlFor="stokyeri">Stok yeri</label>
        <FieldPair>
          <Field id="stokyeri" icon={<BarcodeIcon />} value="YARIMAMUL DEPO" grow />
          <label><CheckBox type="checkbox" />Bağlı</label>
        </FieldPair>
        <label htmlFor="kodlar">İşlem Kodları</label>
        <FieldBox>
          <select id="kodlar"><option>Seçilmedi</option></select>
          <IconButton aria-label="Aç"><Caret color="#4a76b5" size={6} /></IconButton>
        </FieldBox>

        <label htmlFor="dinamik">Dinamik stok</label>
        <Field id="dinamik" icon={<BarcodeIcon />} />
        <label htmlFor="raf">Raf</label>
        <Field id="raf" icon={<TreeIcon />} />
        <label htmlFor="nokta">İşlem noktası</label>
        <FieldPair>
          <Field id="nokta" icon={<DoubleTick />} grow />
          <label><CheckBox type="checkbox" />Bağlı</label>
        </FieldPair>

        <label htmlFor="kalite">Kalite</label>
        <Field id="kalite" icon={<DoubleTick />} />
        <label htmlFor="lot">Lot</label>
        <Field id="lot" icon={<TagIcon />} />
        <span />
        <RefreshButton disabled><DoubleTick color="#b8c2d0" />Yenile</RefreshButton>
      </FieldGrid>
    </FilterBody>
  </FilterPanel>
);

export default function App() {
  return (
    <Desktop>
      <Global />
      <Defs />
      <MainWindow>
        <TitleBar>
          <Butterfly />
          <TitleText>Stok Yeri İncele</TitleText>
          <WindowButtons />
        </TitleBar>
        <Client>
          <Toolbar>
            <NavButtons />
            <Group><ToolButton aria-label="Listele"><GridSearchIcon /></ToolButton></Group>
            <Group><ToolButton aria-label="Düzenle"><EditIcon /></ToolButton></Group>
            <Group><ToolButton aria-label="Önizle"><PreviewIcon /></ToolButton></Group>
            <OutputButtons />
            <ToolButton aria-label="Çıkış" $w={80}><DoorIcon /></ToolButton>
            <RecordInfo title="Stok Yeri İncele" id="4" />
          </Toolbar>
          <MainBody>
            <SidePane />
            <VerticalSplitter />
            <StockTabs />
          </MainBody>
        </Client>
      </MainWindow>

      <DialogWindow role="dialog" aria-label="Stok Hareketleri">
        <TitleBar $active>
          <Butterfly />
          <TitleText $active>Stok Hareketleri</TitleText>
          <WindowButtons active />
        </TitleBar>
        <Client>
          <Toolbar>
            <NavButtons atStart />
            <OutputButtons />
            <Group>
              <ToolButton aria-label="M" $w={44}><BrandIcon /></ToolButton>
              <ToolButton aria-label="M seçenekleri" $w={16} $join><Caret color="#4a76b5" size={6} /></ToolButton>
            </Group>
            <ToolButton aria-label="Çıkış" $w={80}><DoorIcon /></ToolButton>
            <RecordInfo title="Stok Hareketleri" id="8088" />
          </Toolbar>
          <GridPanel>
            <SearchBox>
              <input type="text" placeholder="Aramak için metin giriniz..." aria-label="Hareket ara" />
              <Magnifier />
            </SearchBox>
            <GroupHint>Gruplamak istediğiniz sütun başlığını buraya sürükleyiniz</GroupHint>
            <MovementGrid />
            <SummaryBar>
              <SummaryCell>4,00</SummaryCell>
              <SummaryCell>,00</SummaryCell>
            </SummaryBar>
            <FilterBar>
              <svg width="7" height="7" viewBox="0 0 7 7"><path d="M.5 .5L6.500 6.500M6.500 .5L.5 6.500" stroke="#3d6299" strokeWidth="1.200" /></svg>
              <FilterText>
                <CheckBox type="checkbox" defaultChecked />
                (Lot = SİYAH-DERİ-AHŞAP) ve ((Varyant Adı = PARAMETRELİ SAĞ BAZA Varyantı) veya (Varyant Adı = PARAMETRELİ SOL BAZA Varyantı))
              </FilterText>
              <Caret color="#a3b4cc" size={6} />
              <SmallButton>Özelleştir...</SmallButton>
            </FilterBar>
            <NavBar>
              <Pager>
                <PagerButton aria-label="İlk"><PagerIcon kind="first" /></PagerButton>
                <PagerButton aria-label="Önceki"><PagerIcon kind="prev" /></PagerButton>
                <PageNumber>1 / 4</PageNumber>
                <PagerButton aria-label="Sonraki"><PagerIcon kind="next" /></PagerButton>
                <PagerButton aria-label="Son"><PagerIcon kind="last" /></PagerButton>
                <PagerButton aria-label="Atla"><PagerIcon kind="skip" /></PagerButton>
              </Pager>
              <NavScroll>
                <ScrollTrack $h={26}>
                  <SideArrow />
                  <ScrollThumb $w="67%" $dark><Grip /></ScrollThumb>
                  <SideArrow right />
                </ScrollTrack>
              </NavScroll>
            </NavBar>
          </GridPanel>
          <Filters />
        </Client>
      </DialogWindow>
    </Desktop>
  );
}
